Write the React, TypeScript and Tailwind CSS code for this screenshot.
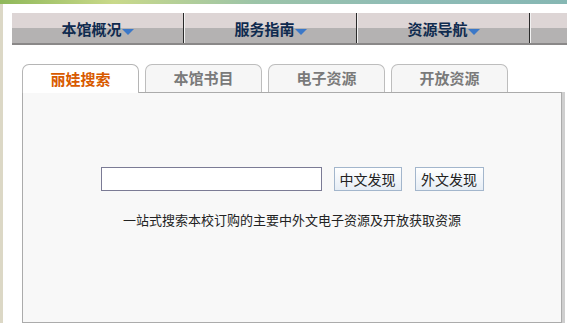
const navItems = ["本馆概况", "服务指南", "资源导航"];
const tabs = ["丽娃搜索", "本馆书目", "电子资源", "开放资源"];

function NavItem({ label }: { label: string }) {
  return (
    <>
      <div className="w-[171px] shrink-0 flex items-center justify-center pt-[1px]">
        <span className="text-[15px] font-bold text-[#0f2b4f] leading-none">{label}</span>
        <span className="mt-[7px] w-0 h-0 border-l-[6px] border-r-[6px] border-t-[6px] border-l-transparent border-r-transparent border-t-[#3b78c8]" />
      </div>
      <div className="w-[2px] shrink-0 h-full flex">
        <div className="w-[1px] bg-[#2a2a2a]" />
        <div className="w-[1px] bg-[#f2f2f2]" />
      </div>
    </>
  );
}

export default function App() {
  return (
    <div
      className="w-[567px] h-[323px] overflow-hidden flex flex-col bg-[#dcd8c6]"
      style={{ fontFamily: '"Noto Sans CJK SC", "DejaVu Sans", sans-serif' }}
    >
      {/* top decoration strip */}
      <div className="h-[4px] shrink-0 bg-[linear-gradient(to_right,#8fb85a,#c9d98a_20%,#9cc4a8_45%,#8fbcb6_70%,#86b7b3)]" />

      <div className="flex-1 ml-[3px] bg-white flex flex-col pt-[9px] pl-[9px]">
        {/* nav bar */}
        <div className="h-[32px] shrink-0 flex border-b-2 border-[#8a8888] bg-[linear-gradient(to_bottom,#ddd5d5_0%,#ddd5d5_50%,#b4b2b2_50%,#b4b2b2_100%)]">
          {navItems.map((n) => (
            <NavItem key={n} label={n} />
          ))}
          <div className="flex-1" />
        </div>

        {/* tabs */}
        <div className="mt-[19px] ml-[10px] flex gap-[6px] h-[28px] shrink-0 relative z-10">
          {tabs.map((t, i) => (
            <div
              key={t}
              className={
                i === 0
                  ? "w-[117px] h-[29px] rounded-t-[7px] border border-b-0 border-[#b5b5b5] bg-white flex items-center justify-center text-[15px] font-bold text-[#d85a00]"
                  : "w-[117px] h-[28px] rounded-t-[7px] border border-b-0 border-[#bdbdbd] bg-[#f6f6f6] flex items-center justify-center text-[15px] font-bold text-[#7a7a7a]"
              }
            >
              {t}
            </div>
          ))}
        </div>

        {/* panel */}
        <div className="ml-[10px] flex-1 flex">
          <div className="w-[540px] border border-[#ababab] bg-[#f8f8f8] flex flex-col items-center">
            <div className="mt-[74px] flex items-center">
              <div className="w-[221px] h-[24px] border border-[#7b7b95] bg-white" />
              <button className="ml-[12px] w-[68px] h-[24px] border border-[#a3b6cc] bg-[linear-gradient(to_bottom,#ffffff,#e6edf5)] text-[14px] text-[#222] leading-none">
                中文发现
              </button>
              <button className="ml-[13px] w-[69px] h-[24px] border border-[#a3b6cc] bg-[linear-gradient(to_bottom,#ffffff,#e6edf5)] text-[14px] text-[#222] leading-none">
                外文发现
              </button>
            </div>
            <p className="mt-[22px] text-[13px] text-[#222] leading-none">
              一站式搜索本校订购的主要中外文电子资源及开放获取资源
            </p>
          </div>
          <div className="w-[3px] bg-[#cfcfcf]" />
        </div>
      </div>
    </div>
  );
}
